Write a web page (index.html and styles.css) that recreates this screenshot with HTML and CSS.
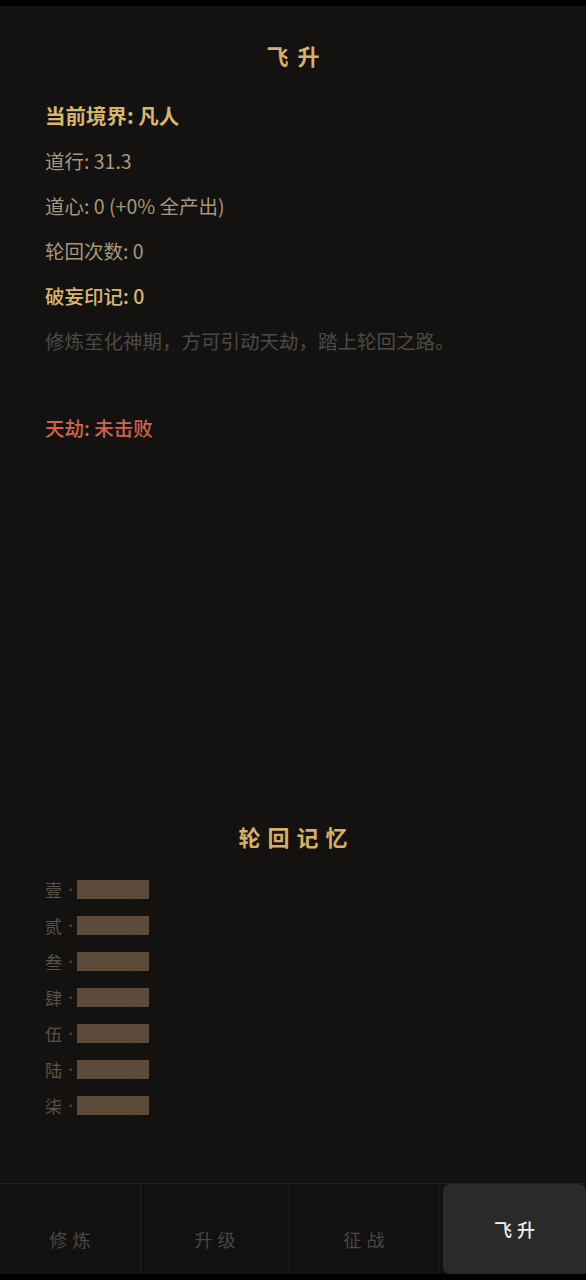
FILE: index.html
```html
<!DOCTYPE html>
<html lang="zh-CN">
<head>
<meta charset="utf-8">
<title>飞升</title>
<link rel="stylesheet" href="styles.css">
</head>
<body>
<div class="screen">
  <div class="app">
    <main class="content">
      <h1 class="title">飞升</h1>
      <div class="stats">
        <div class="stat stat-gold stat-strong">当前境界: 凡人</div>
        <div class="stat">道行: 31.3</div>
        <div class="stat">道心: 0 (+0% 全产出)</div>
        <div class="stat">轮回次数: 0</div>
        <div class="stat stat-gold">破妄印记: 0</div>
        <div class="stat stat-muted">修炼至化神期，方可引动天劫，踏上轮回之路。</div>
      </div>
      <div class="trial">天劫: 未击败</div>

      <section class="memory">
        <h2 class="memory-title">轮回记忆</h2>
        <ul class="memory-list">
          <li class="memory-row"><span class="memory-label">壹</span><span class="memory-dot">·</span><span class="memory-bar"><span class="memory-seg"></span><span class="memory-seg short"></span></span></li>
          <li class="memory-row"><span class="memory-label">贰</span><span class="memory-dot">·</span><span class="memory-bar"><span class="memory-seg"></span><span class="memory-seg short"></span></span></li>
          <li class="memory-row"><span class="memory-label">叁</span><span class="memory-dot">·</span><span class="memory-bar"><span class="memory-seg"></span><span class="memory-seg short"></span></span></li>
          <li class="memory-row"><span class="memory-label">肆</span><span class="memory-dot">·</span><span class="memory-bar"><span class="memory-seg"></span><span class="memory-seg short"></span></span></li>
          <li class="memory-row"><span class="memory-label">伍</span><span class="memory-dot">·</span><span class="memory-bar"><span class="memory-seg"></span><span class="memory-seg short"></span></span></li>
          <li class="memory-row"><span class="memory-label">陆</span><span class="memory-dot">·</span><span class="memory-bar"><span class="memory-seg"></span><span class="memory-seg short"></span></span></li>
          <li class="memory-row"><span class="memory-label">柒</span><span class="memory-dot">·</span><span class="memory-bar"><span class="memory-seg"></span><span class="memory-seg short"></span></span></li>
        </ul>
      </section>
    </main>

    <nav class="tabbar">
      <div class="tab">修炼</div>
      <div class="tab">升级</div>
      <div class="tab">征战</div>
      <div class="tab tab-active">飞升</div>
    </nav>
  </div>
</div>
</body>
</html>
```

FILE: styles.css
```css
* {
  box-sizing: border-box;
}

html, body {
  margin: 0;
  padding: 0;
  background: #000;
}

body {
  font-family: "Noto Sans CJK SC", "Noto Sans", sans-serif;
}

.screen {
  width: 586px;
  height: 1280px;
  padding: 6px 0 6px;
  background: #000;
}

.app {
  height: 100%;
  background: #141211;
  display: flex;
  flex-direction: column;
}

.content {
  flex: 1;
  padding: 34px 45px 0;
  display: flex;
  flex-direction: column;
}

.title {
  margin: 0 0 23px;
  font-size: 22px;
  line-height: 30px;
  font-weight: 700;
  text-align: center;
  letter-spacing: 9px;
  padding-left: 9px;
  color: #d6b06a;
}

.stats {
  display: flex;
  flex-direction: column;
}

.stat {
  font-size: 19.5px;
  line-height: 45px;
  color: #a6977c;
  white-space: nowrap;
}

.stat-gold {
  color: #d8b672;
  font-weight: 500;
}

.stat-strong {
  font-size: 20.5px;
  font-weight: 700;
}

.stat-muted {
  color: #4d4a46;
}

.trial {
  margin-top: 42px;
  font-size: 19.5px;
  line-height: 45px;
  font-weight: 500;
  color: #d0644e;
}

.memory {
  margin-top: 371px;
}

.memory-title {
  margin: 0 0 20px;
  font-size: 22px;
  line-height: 30px;
  font-weight: 700;
  text-align: center;
  letter-spacing: 7px;
  padding-left: 7px;
  color: #d6b06a;
}

.memory-list {
  list-style: none;
  margin: 0;
  padding: 0;
}

.memory-row {
  height: 36px;
  display: flex;
  align-items: center;
}

.memory-label {
  font-size: 17px;
  color: #5b5248;
  width: 19px;
}

.memory-dot {
  font-size: 12px;
  color: #4c443b;
  width: 13px;
  text-align: center;
}

.memory-bar {
  width: 72px;
  height: 19px;
  background: #5c4b3b;
  display: flex;
}

.memory-seg {
  width: 53px;
  height: 100%;
  border-right: 1px solid #554535;
}

.memory-seg.short {
  width: 19px;
  border-right: none;
}

.tabbar {
  height: 91px;
  border-top: 1px solid #232120;
  display: grid;
  grid-template-columns: 141px 149px 149px 1fr;
  background: #131110;
}

.tab {
  display: flex;
  align-items: center;
  justify-content: center;
  padding-top: 20px;
  font-size: 18px;
  letter-spacing: 5px;
  padding-left: 5px;
  color: #4a4745;
  border-right: 1px solid #211f1d;
}

.tab-active {
  margin-left: 4px;
  padding-top: 0;
  border-right: none;
  background: #2a2a2a;
  border-radius: 7px 7px 0 7px;
  color: #f2f2f2;
  font-weight: 500;
}
```
